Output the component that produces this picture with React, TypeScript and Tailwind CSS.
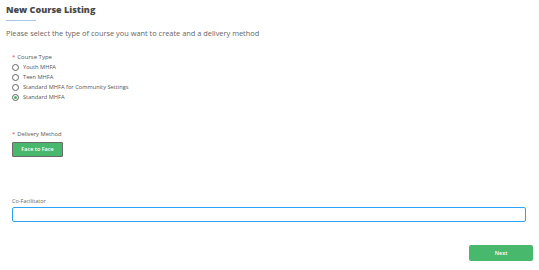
import { useState } from 'react';

const App = () => {
  const [courseType, setCourseType] = useState('Standard MHFA');

  const types = ['Youth MHFA', 'Teen MHFA', 'Standard MHFA for Community Settings', 'Standard MHFA'];

  return (
    <div className="w-[539px] h-[270px] bg-white font-['Open_Sans',sans-serif] text-[#555] overflow-hidden">
      <div className="px-[6px] pt-[3px]">
        {/* Header */}
        <h1 className="text-[9px] font-extrabold text-[#4a4a4a] leading-[14px]">New Course Listing</h1>
        <div className="w-[30px] h-[1px] bg-[#a9c5e8] mt-[3px]"></div>
        <p className="text-[7.4px] text-[#666] mt-[7px] leading-[10px]">
          Please select the type of course you want to create and a delivery method
        </p>
      </div>

      <div className="px-[12px]">
        {/* Course type */}
        <div className="mt-[15px]">
          <p className="text-[6px] leading-[8px] text-[#555]">
            <span className="text-[#e04b4b] mr-[2px]">*</span>Course Type
          </p>
          <div className="mt-[1px] flex flex-col">
            {types.map((t) => (
              <label
                key={t}
                className="flex items-center gap-[4px] h-[10px] cursor-pointer"
                onClick={() => setCourseType(t)}
              >
                <span className="w-[7px] h-[7px] rounded-full border border-[#666] flex items-center justify-center">
                  {courseType === t && <span className="w-[3px] h-[3px] rounded-full bg-[#48b86c]"></span>}
                </span>
                <span className="text-[5.7px] leading-[8px] text-[#555]">{t}</span>
              </label>
            ))}
          </div>
        </div>

        {/* Delivery method */}
        <div className="mt-[28px]">
          <p className="text-[5.8px] leading-[8px] text-[#555]">
            <span className="text-[#e04b4b] mr-[2px]">*</span>Delivery Method
          </p>
          <button className="block mt-[4px] w-[51px] h-[15px] bg-[#48b86c] border border-[#6b6b6b] rounded-[1px] text-white text-[5.5px] leading-[13px] font-semibold">
            Face to Face
          </button>
        </div>

        {/* Co-facilitator */}
        <div className="mt-[40px]">
          <p className="text-[5.5px] leading-[8px] text-[#666]">Co-Facilitator</p>
          <input className="block mt-[2px] w-[514px] h-[15px] border-[1.5px] border-[#2ea2f5] rounded-[2px] outline-none" />
        </div>

        <div className="flex justify-end mt-[23px] -mr-[6px]">
          <button className="block w-[64px] h-[16px] bg-[#48b86c] rounded-[2px] text-white text-[5.5px] leading-[16px] font-semibold">
            Next
          </button>
        </div>
      </div>
    </div>
  );
};

export default App;
